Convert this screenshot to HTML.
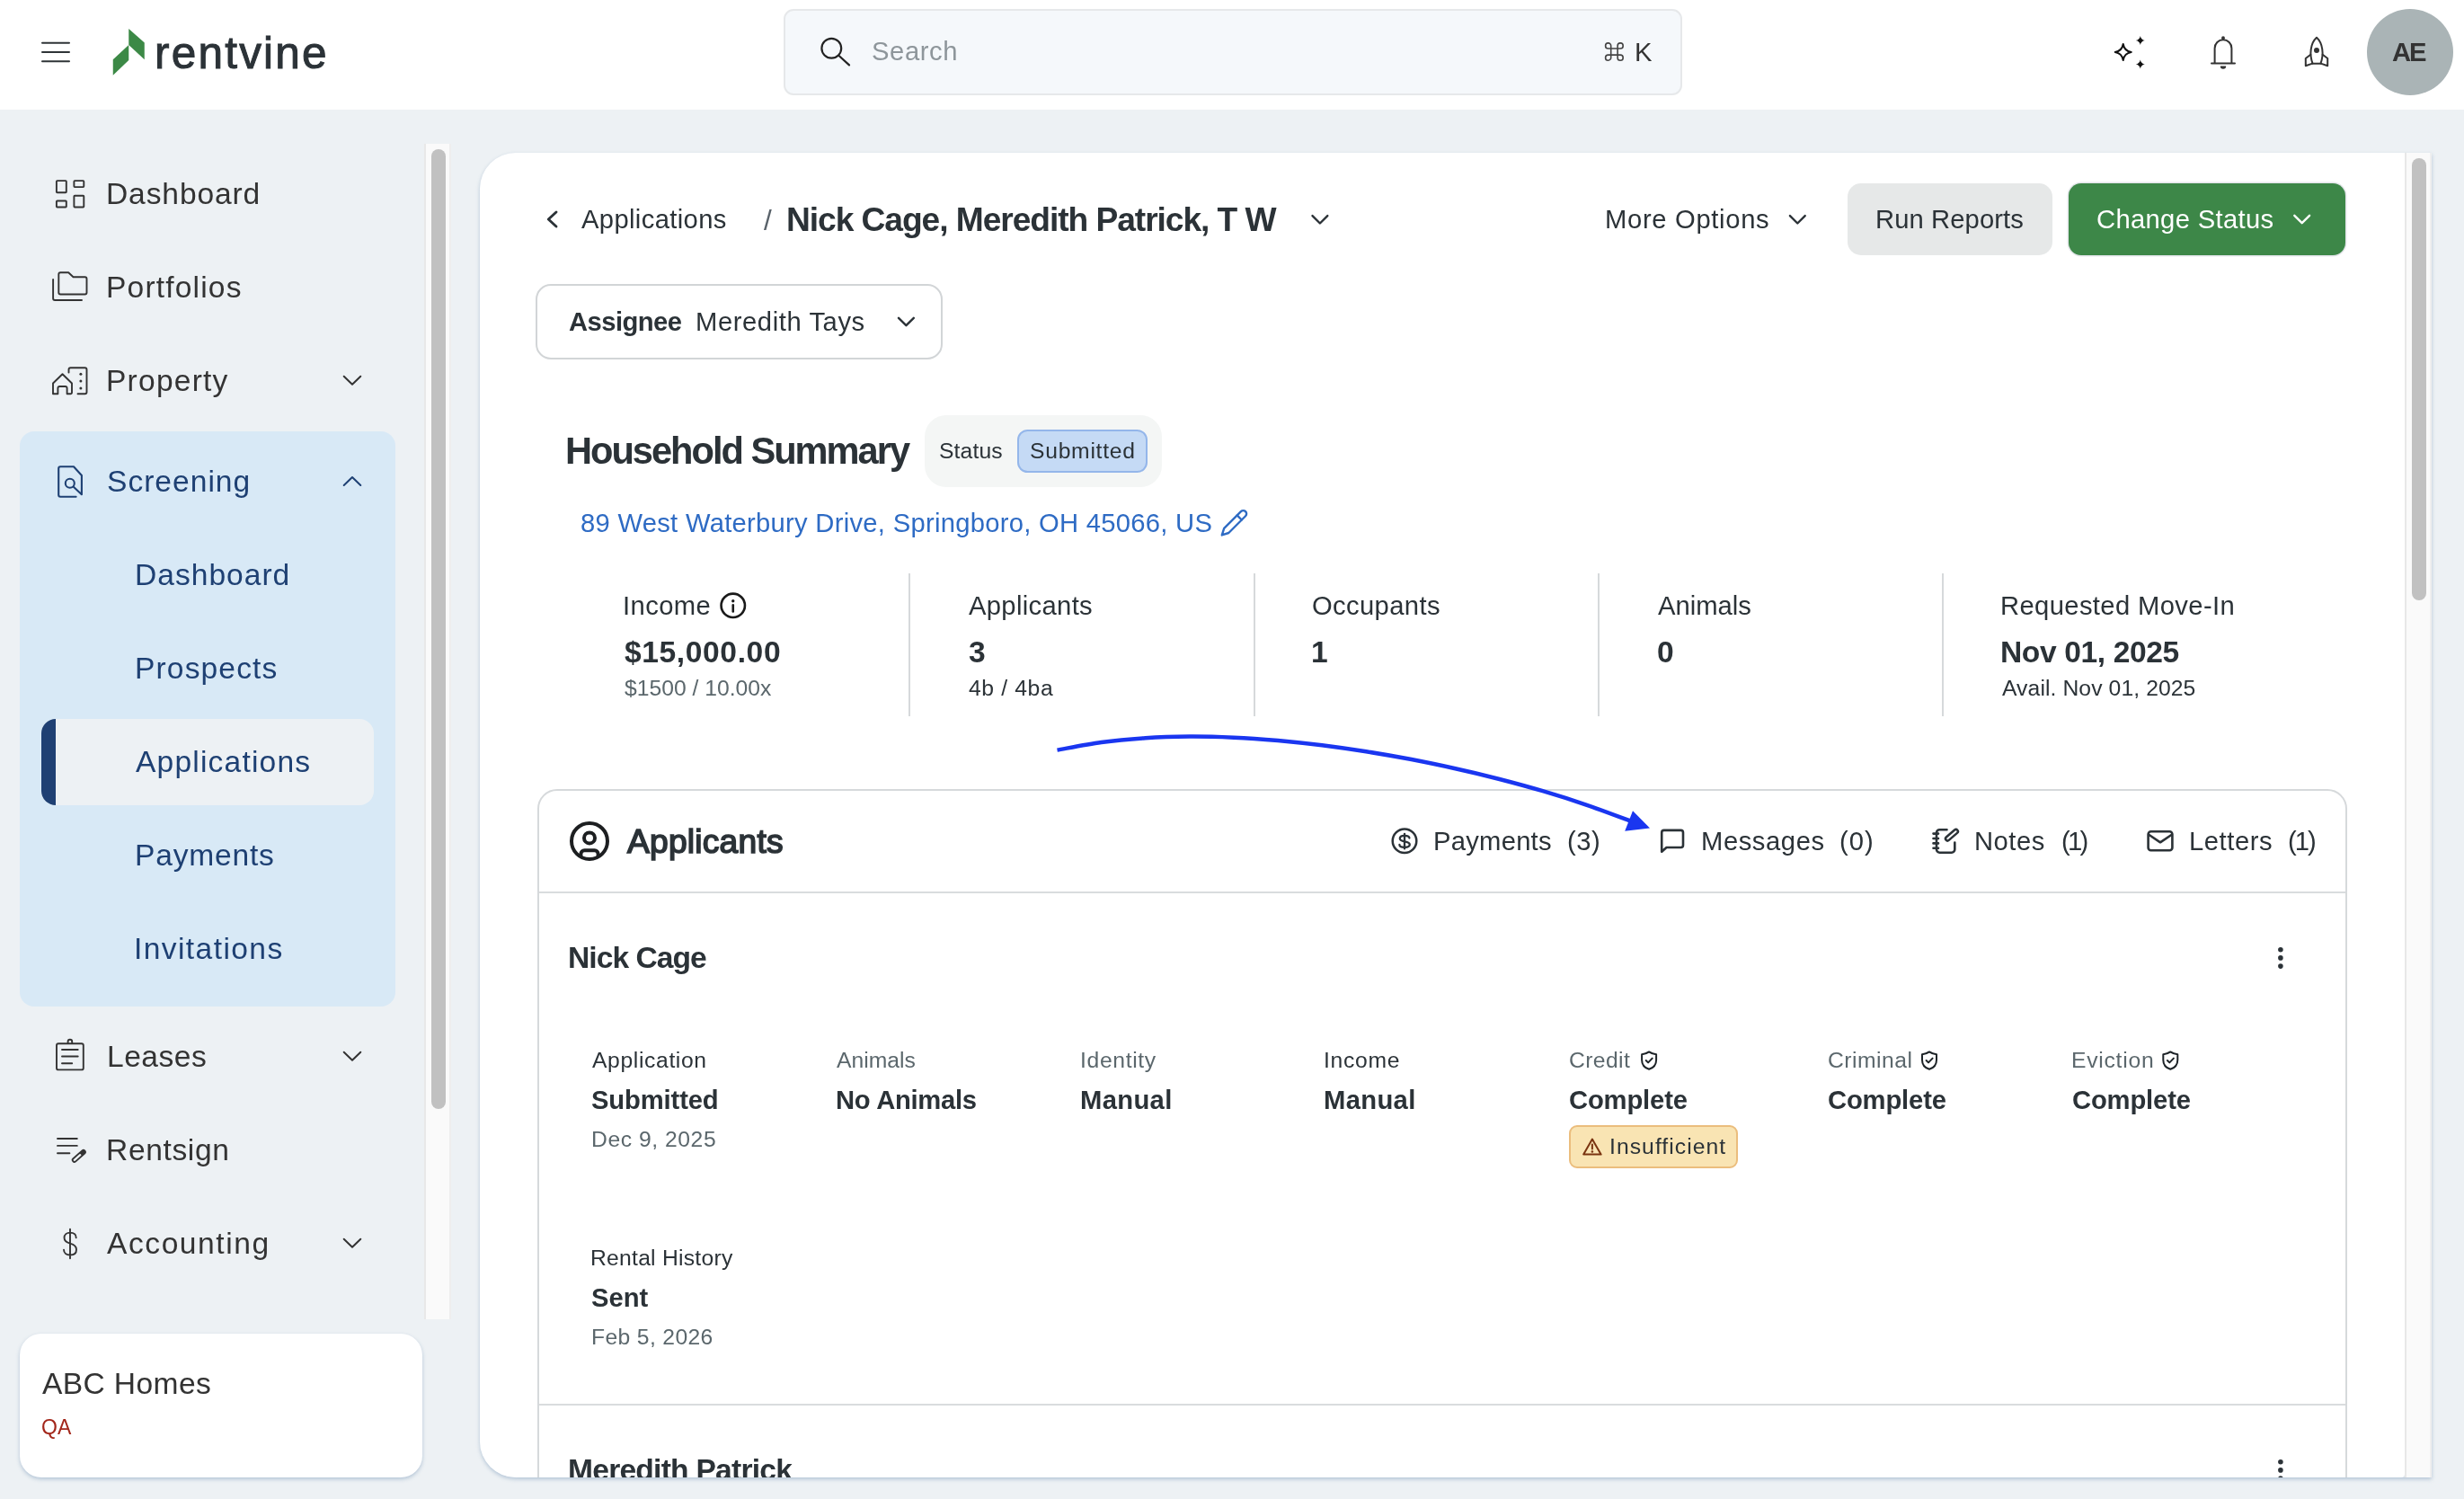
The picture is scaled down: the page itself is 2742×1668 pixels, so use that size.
<!DOCTYPE html>
<html><head><meta charset="utf-8"><title>Rentvine</title>
<style>
*{box-sizing:border-box;margin:0;padding:0}
html,body{width:2742px;height:1668px;overflow:hidden;background:#edf1f4;font-family:"Liberation Sans",sans-serif}
.a{position:absolute}
.t{position:absolute;white-space:nowrap;line-height:1;will-change:transform}
svg{position:absolute;overflow:visible}
#top{left:0;top:0;width:2742px;height:122px;background:#fff}
#search{left:872px;top:10px;width:1000px;height:95.5px;background:#f5f8fb;border:2px solid #e6e8ea;border-radius:11px}
#avatar{left:2633.5px;top:10px;width:96.5px;height:96px;border-radius:50%;background:#aab4b6}
#grp{left:22px;top:480px;width:418px;height:639.5px;border-radius:16px;background:#d8e9f6}
#act{left:46px;top:799.6px;width:369.6px;height:96px;border-radius:16px;background:#edf1f4;overflow:hidden}
#act i{position:absolute;left:0;top:0;width:16px;height:100%;background:#1f4073}
#strack{left:472px;top:160px;width:30px;height:1308px;background:#fafafa;border-left:2px solid #e8e8e8;border-right:2px solid #eee}
#sthumb{left:480px;top:166px;width:16px;height:1068px;border-radius:8px;background:#c1c1c1}
#org{left:21.5px;top:1483.5px;width:448.5px;height:160.5px;border-radius:24px;background:#fff;box-shadow:0 2px 4px rgba(100,135,175,.42)}
#wrap{left:534px;top:170px;width:2172px;height:1474px;background:#dde5ee;border-radius:40px 0 0 40px;box-shadow:0 2px 4px rgba(100,135,175,.42)}
#panel{left:534px;top:170px;width:2142.2px;height:1474px;background:#fff;border-radius:40px 0 4px 40px;overflow:hidden}
#mtrack{left:2676px;top:170px;width:30px;height:1474px;background:#fafafa;border-left:2px solid #e8e8e8;border-right:2px solid #efefef}
#mthumb{left:2683.8px;top:176px;width:16.2px;height:492px;border-radius:8px;background:#c1c1c1}
#runb{left:2056.3px;top:203.9px;width:227.6px;height:80px;border-radius:15px;background:#e6e8e8}
#chgb{left:2301.9px;top:203.9px;width:308px;height:80px;border-radius:14px;background:#3d8748;box-shadow:0 0 0 1.5px #e4e6ea}
#asg{left:596.25px;top:315.75px;width:453px;height:83.75px;border:2px solid #d2d5d7;border-radius:17px;background:#fff}
#stc{left:1028.9px;top:462px;width:264.2px;height:80px;border-radius:24px;background:#f4f6f5}
#stb{left:1132px;top:478.1px;width:145px;height:48px;border-radius:11.5px;background:#c5daf5;border:2px solid #94b6ea}
.dv{position:absolute;top:638px;width:2px;height:159px;background:#d6d9db}
#card{left:598.2px;top:878px;width:2013.6px;height:900px;border:2px solid #d6d9db;border-radius:22px;background:#fff}
.hl{position:absolute;left:600px;width:2010px;height:2px;background:#d9dcde}
#warn{left:1746px;top:1252.3px;width:187.6px;height:47.4px;border-radius:9px;background:#f9e4b3;border:2px solid #ebbd7d}
</style></head><body>
<div id="top" class="a"></div>
<!-- hamburger -->
<svg style="left:0;top:0" width="200" height="122"><g stroke="#2f3437" stroke-width="2" stroke-linecap="round"><path d="M47 47.7H77M47 58H77M47 68.2H77"/></g>
<polygon points="143.25,32 160.75,47.5 160.75,66.25 143.25,50" fill="#3c8946"/><polygon points="143.25,50 143.25,67 125.75,83.75 125.75,66.25" fill="#3c8946"/></svg>
<div id="search" class="a"></div>
<svg style="left:900px;top:30px" width="60" height="60"><g fill="none" stroke="#222" stroke-width="2.2" stroke-linecap="round"><circle cx="25.3" cy="23.8" r="10.9"/><path d="M33.6 32L45 42.4"/></g></svg>
<svg style="left:0;top:0" width="2742" height="122"><g fill="none" stroke="#444" stroke-width="1.6"><path d="M1792.7 54H1800.1V61.1H1792.7ZM1792.7 54H1789.65A3.05 3.05 0 1 1 1792.7 50.95ZM1800.1 54V50.95A3.05 3.05 0 1 1 1803.15 54ZM1800.1 61.1H1803.15A3.05 3.05 0 1 1 1800.1 64.15ZM1792.7 61.1V64.15A3.05 3.05 0 1 1 1789.65 61.1Z"/></g></svg>
<svg style="left:0;top:0" width="2742" height="122"><path d="M2362.7 49Q2363.96 56.74 2371.7 58Q2363.96 59.26 2362.7 67Q2361.4399999999996 59.26 2353.7 58Q2361.4399999999996 56.74 2362.7 49Z" fill="none" stroke="#111" stroke-width="2" stroke-linejoin="round"/><path d="M2381.8 40Q2382.6000000000004 44.2 2386.8 45Q2382.6000000000004 45.8 2381.8 50Q2381.0 45.8 2376.8 45Q2381.0 44.2 2381.8 40Z" fill="#111"/><path d="M2381.8 66.4Q2382.6000000000004 70.60000000000001 2386.8 71.4Q2382.6000000000004 72.2 2381.8 76.4Q2381.0 72.2 2376.8 71.4Q2381.0 70.60000000000001 2381.8 66.4Z" fill="#111"/><g fill="none" stroke="#333" stroke-width="2" stroke-linecap="round" stroke-linejoin="round"><path d="M2464.6 70.6V53.7a9.4 9.4 0 0 1 18.8 0V70.6M2461 70.6H2487"/><path d="M2578 41.8C2571.2 48 2569.6 60 2573.6 70.8H2582.4C2586.4 60 2584.8 48 2578 41.8Z"/><path d="M2571.3 60.8L2565.8 65V73.2L2573.4 70.6M2584.7 60.8L2590.2 65V73.2L2582.6 70.6"/></g><circle cx="2474" cy="42.2" r="1.9" fill="#333"/><path d="M2470.8 73.6a3.2 3.2 0 0 0 6.4 0Z" fill="#333"/><circle cx="2578" cy="55.9" r="3" fill="#333"/></svg>
<div id="avatar" class="a"></div>

<!-- sidebar -->
<div id="grp" class="a"></div>
<div id="act" class="a"><i></i></div>
<div id="strack" class="a"></div><div id="sthumb" class="a"></div>
<div id="org" class="a"></div>
<svg style="left:0;top:0" width="520" height="1668"><g fill="none" stroke="#333333" stroke-width="1.9" stroke-linejoin="round" stroke-linecap="round"><rect x="62.9" y="201.1" width="10.9" height="13.1" rx="0.8"/><rect x="82.4" y="201.1" width="10.9" height="7" rx="0.8"/><rect x="62.9" y="223.5" width="10.9" height="7" rx="0.8"/><rect x="82.4" y="217.7" width="10.9" height="12.8" rx="0.8"/><path d="M65.3 325.5V305.3a2 2 0 0 1 2-2H76.2L81.5 308.3H94.5a2 2 0 0 1 2 2V325.5a2 2 0 0 1-2 2H67.3a2 2 0 0 1-2-2Z"/><path d="M59.1 311V332a2 2 0 0 0 2 2H91"/><path d="M59 438.2V426.5L69.5 416.3L80 426.5V436.7a1.5 1.5 0 0 1-1.5 1.5H74.6V432a2 2 0 0 0-2-2H66.4a2 2 0 0 0-2 2V438.2H60.5a1.5 1.5 0 0 1-1.5-1.5"/><path d="M76.5 414.5V411.2a2 2 0 0 1 2-2H94.5a2 2 0 0 1 2 2V436.2a2 2 0 0 1-2 2H86.5"/><rect x="63" y="1161.2" width="29.8" height="29.2" rx="2"/><path d="M75.6 1161V1159a2.3 2.3 0 0 1 4.6 0V1161"/><path d="M69 1168H86.7M69 1175.5H86.7M69 1183.3H80.2"/><path d="M64 1267H85.8M64 1274.9H85.8M64 1283.3H77.4"/><path d="M78 1367.8V1400.3M84.7 1377.2C84.7 1373.4 81.7 1371.6 78 1371.6C74.1 1371.6 71.5 1373.8 71.5 1377.3C71.5 1381.4 74.5 1382.7 78 1383.7C81.9 1384.8 85 1386.2 85 1390.4C85 1394.4 82 1396.5 78 1396.5C74 1396.5 71 1394.4 71 1390.6"/></g><circle cx="89.9" cy="416.3" r="1.5" fill="#333333"/><circle cx="89.9" cy="424.1" r="1.5" fill="#333333"/><circle cx="89.9" cy="432.1" r="1.5" fill="#333333"/><path d="M92.8 1282L82.8 1290.8" stroke="#333333" stroke-width="6" stroke-linecap="round"/><path d="M89.2 1285.2L82.8 1290.8" stroke="#edf1f4" stroke-width="2.4" stroke-linecap="round"/><g fill="none" stroke="#1e4073" stroke-width="2.1" stroke-linejoin="round" stroke-linecap="round"><path d="M84.6 552.8H67.2a2 2 0 0 1-2-2V521.2a2 2 0 0 1 2-2H82L90.9 529V550.3L81.6 541.6"/><circle cx="77.8" cy="537.8" r="5"/></g><path d="M382.7 418.8L392 427.8L401.3 418.8" stroke="#333333" stroke-width="2" fill="none" stroke-linecap="round" stroke-linejoin="round"/><path d="M382.7 540.0L392 531.0L401.3 540.0" stroke="#1e4073" stroke-width="2" fill="none" stroke-linecap="round" stroke-linejoin="round"/><path d="M382.7 1170.8L392 1179.8L401.3 1170.8" stroke="#333333" stroke-width="2" fill="none" stroke-linecap="round" stroke-linejoin="round"/><path d="M382.7 1378.8L392 1387.8L401.3 1378.8" stroke="#333333" stroke-width="2" fill="none" stroke-linecap="round" stroke-linejoin="round"/></svg>

<!-- main panel -->
<div id="wrap" class="a"></div><div id="panel" class="a"></div>
<div id="mtrack" class="a"></div><div id="mthumb" class="a"></div>
<div id="runb" class="a"></div><div id="chgb" class="a"></div>
<div id="asg" class="a"></div>
<div id="stc" class="a"></div><div id="stb" class="a"></div>
<div class="dv" style="left:1011px"></div><div class="dv" style="left:1394.7px"></div><div class="dv" style="left:1778px"></div><div class="dv" style="left:2161px"></div>
<div class="a" style="left:534px;top:170px;width:2142px;height:1474px;overflow:hidden;border-radius:40px 0 0 40px"><div id="card" class="a" style="left:64.2px;top:708px"></div>
<div class="hl" style="left:66px;top:822px"></div><div class="hl" style="left:66px;top:1391.7px"></div>
<div class="t" style="left:97.60px;top:1449.44px;font-size:33.6px;color:#2b3237;font-weight:700;letter-spacing:-0.760px;">Meredith Patrick</div>
</div>
<div id="warn" class="a"></div>
<svg style="left:0;top:0" width="2742" height="1668"><defs><clipPath id="pc"><rect x="534" y="170" width="2142" height="1474"/></clipPath><clipPath id="uc"><circle cx="656" cy="935.9" r="20"/></clipPath></defs><path d="M619 236L610.3 244L619 252" stroke="#2b3237" stroke-width="2.9" fill="none" stroke-linecap="round" stroke-linejoin="round"/><path d="M1460.5 240.10000000000002L1468.9 248.5L1477.3000000000002 240.10000000000002" stroke="#2b3237" stroke-width="2.4" fill="none" stroke-linecap="round" stroke-linejoin="round"/><path d="M1991.8999999999999 240.10000000000002L2000.3 248.5L2008.7 240.10000000000002" stroke="#2b3237" stroke-width="2.4" fill="none" stroke-linecap="round" stroke-linejoin="round"/><path d="M2553.2999999999997 239.8L2561.7 248.2L2570.1 239.8" stroke="#fff" stroke-width="2.4" fill="none" stroke-linecap="round" stroke-linejoin="round"/><path d="M1000.0 353.8L1008.4 362.2L1016.8 353.8" stroke="#2b3237" stroke-width="2.4" fill="none" stroke-linecap="round" stroke-linejoin="round"/><g fill="none" stroke="#2e6bc4" stroke-width="2.4" stroke-linejoin="round" stroke-linecap="round"><path d="M1359.8 595.4L1362.2 587.9L1380.95 569.15A3.6 3.6 0 0 1 1386.05 574.25L1367.3 593Z"/><path d="M1376.7 573.4L1381.8 578.5"/></g><circle cx="815.75" cy="673.8" r="13.2" fill="none" stroke="#1a1a1a" stroke-width="2.6"/><circle cx="815.75" cy="668.8" r="1.7" fill="#1a1a1a"/><path d="M815.75 673.4V680.4" stroke="#1a1a1a" stroke-width="2.6" stroke-linecap="round"/><g fill="none" stroke="#1d1f21" stroke-width="4"><circle cx="656" cy="935.9" r="20"/><circle cx="656" cy="932.4" r="6"/><g clip-path="url(#uc)"><rect x="646.4" y="946.2" width="19.2" height="16" rx="4"/></g></g><g fill="none" stroke="#2b3237" stroke-width="2.5" stroke-linecap="round"><circle cx="1563" cy="935.8" r="13.3"/><path d="M1563 927.8V944.4" stroke-width="2.3"/><path stroke-width="2.3" d="M1568.4 932.6C1568.4 930.6 1566 929.8 1563 929.8C1560 929.8 1557.8 931 1557.8 933C1557.8 935.2 1560 935.8 1563 936.3C1566 936.8 1568.8 937.5 1568.8 939.8C1568.8 941.8 1566 942.8 1563 942.8C1560 942.8 1557.4 942 1557.4 940"/></g><path d="M1854.5 943H1870.5a2.5 2.5 0 0 0 2.5-2.5V926.4a2.5 2.5 0 0 0-2.5-2.5H1851.7a2.5 2.5 0 0 0-2.5 2.5V947.8Z" fill="none" stroke="#2b3237" stroke-width="2.6" stroke-linejoin="round"/><g fill="none" stroke="#2b3237" stroke-width="2.6" stroke-linecap="round" stroke-linejoin="round"><path d="M2166.5 923.2H2158.5a3.5 3.5 0 0 0-3.5 3.5V945.2a3.5 3.5 0 0 0 3.5 3.5H2171.8a3.5 3.5 0 0 0 3.5-3.5V937.5"/><path d="M2151.5 927.6H2157M2151.5 933H2157M2151.5 938.4H2157M2151.5 943.8H2157"/></g><path d="M2176.6 925.2L2167.3 933.2" stroke="#2b3237" stroke-width="7" stroke-linecap="round"/><path d="M2176.6 925.2L2167.3 933.2" stroke="#fff" stroke-width="2" stroke-linecap="round"/><g fill="none" stroke="#2b3237" stroke-width="2.6" stroke-linejoin="round" stroke-linecap="round"><rect x="2390.6" y="925.3" width="26.8" height="21" rx="3"/><path d="M2391.6 929L2404 937.3L2416.4 929"/></g><g fill="#2b3237" clip-path="url(#pc)"><circle cx="2537.9" cy="1056.7" r="2.8"/><circle cx="2537.9" cy="1065.9" r="2.8"/><circle cx="2537.9" cy="1075.1" r="2.8"/><circle cx="2537.9" cy="1626.7" r="2.8"/><circle cx="2537.9" cy="1635.9" r="2.8"/><circle cx="2537.9" cy="1645.1" r="2.8"/></g><g transform="translate(1826.1 1169.2)" fill="none" stroke="#1d2327" stroke-width="2" stroke-linejoin="round" stroke-linecap="round"><path d="M9 1.2C11.5 3 14 3.8 17 4V10.2C17 15.8 13.2 19.2 9 20.6C4.8 19.2 1 15.8 1 10.2V4C4 3.8 6.5 3 9 1.2Z"/><path d="M5.6 10.8L8 13.2L12.6 8.4"/></g><g transform="translate(2138 1169.2)" fill="none" stroke="#1d2327" stroke-width="2" stroke-linejoin="round" stroke-linecap="round"><path d="M9 1.2C11.5 3 14 3.8 17 4V10.2C17 15.8 13.2 19.2 9 20.6C4.8 19.2 1 15.8 1 10.2V4C4 3.8 6.5 3 9 1.2Z"/><path d="M5.6 10.8L8 13.2L12.6 8.4"/></g><g transform="translate(2406.3 1169.2)" fill="none" stroke="#1d2327" stroke-width="2" stroke-linejoin="round" stroke-linecap="round"><path d="M9 1.2C11.5 3 14 3.8 17 4V10.2C17 15.8 13.2 19.2 9 20.6C4.8 19.2 1 15.8 1 10.2V4C4 3.8 6.5 3 9 1.2Z"/><path d="M5.6 10.8L8 13.2L12.6 8.4"/></g><g fill="none" stroke="#7a3410" stroke-width="2" stroke-linejoin="round" stroke-linecap="round"><path d="M1771.9 1267.6L1781.6 1284.6H1762.2Z"/><path d="M1771.9 1273.6V1278.4"/></g><circle cx="1771.9" cy="1281.6" r="1.25" fill="#7a3410"/><path d="M1176.5 834.6C1184.7 833.2 1209.2 828.2 1225.6 826.0C1242.0 823.8 1258.4 822.3 1274.7 821.2C1291.1 820.1 1307.5 819.7 1323.8 819.6C1340.2 819.5 1356.6 820.0 1373.0 820.7C1389.3 821.4 1405.7 822.6 1422.1 824.0C1438.4 825.5 1454.8 827.3 1471.2 829.3C1487.6 831.4 1503.9 833.7 1520.3 836.3C1536.7 838.9 1553.1 841.7 1569.4 844.8C1585.8 848.0 1602.2 851.3 1618.5 855.0C1634.9 858.6 1651.3 862.5 1667.7 866.7C1684.0 870.9 1700.4 875.3 1716.8 880.2C1733.1 885.0 1749.5 890.2 1765.9 895.8C1782.3 901.4 1806.8 910.8 1815.0 913.8" fill="none" stroke="#1a36f0" stroke-width="4.5" stroke-linecap="butt"/><polygon points="1836,921.6 1817,902.2 1808.2,924.8" fill="#1a36f0"/></svg>
<div class="t" style="left:172.00px;top:33.52px;font-size:49.5px;color:#2b3237;letter-spacing:2.214px;-webkit-text-stroke:1px #2b3237;">rentvine</div>
<div class="t" style="left:970.00px;top:43.18px;font-size:29.2px;color:#8e969b;letter-spacing:0.600px;">Search</div>
<div class="t" style="left:1819.20px;top:44.18px;font-size:29.2px;color:#333;">K</div>
<div class="t" style="left:2662.40px;top:44.18px;font-size:29.2px;color:#333;font-weight:700;letter-spacing:-2.000px;">AE</div>
<div class="t" style="left:118.00px;top:199.44px;font-size:33.6px;color:#333333;letter-spacing:0.875px;">Dashboard</div>
<div class="t" style="left:118.00px;top:303.44px;font-size:33.6px;color:#333333;letter-spacing:1.167px;">Portfolios</div>
<div class="t" style="left:118.20px;top:407.44px;font-size:33.6px;color:#333333;letter-spacing:1.214px;">Property</div>
<div class="t" style="left:119.00px;top:519.44px;font-size:33.6px;color:#1e4073;letter-spacing:1.000px;">Screening</div>
<div class="t" style="left:150.00px;top:623.44px;font-size:33.6px;color:#1e4073;letter-spacing:1.000px;">Dashboard</div>
<div class="t" style="left:150.00px;top:727.44px;font-size:33.6px;color:#1e4073;letter-spacing:1.125px;">Prospects</div>
<div class="t" style="left:151.40px;top:831.44px;font-size:33.6px;color:#1e4073;letter-spacing:1.182px;">Applications</div>
<div class="t" style="left:150.00px;top:935.44px;font-size:33.6px;color:#1e4073;letter-spacing:0.786px;">Payments</div>
<div class="t" style="left:149.00px;top:1039.44px;font-size:33.6px;color:#1e4073;letter-spacing:1.400px;">Invitations</div>
<div class="t" style="left:118.60px;top:1159.44px;font-size:33.6px;color:#333333;letter-spacing:0.480px;">Leases</div>
<div class="t" style="left:118.20px;top:1263.44px;font-size:33.6px;color:#333333;letter-spacing:0.629px;">Rentsign</div>
<div class="t" style="left:119.40px;top:1367.44px;font-size:33.6px;color:#333333;letter-spacing:1.556px;">Accounting</div>
<div class="t" style="left:46.80px;top:1522.84px;font-size:33.6px;color:#333333;letter-spacing:0.375px;">ABC Homes</div>
<div class="t" style="left:45.60px;top:1577.45px;font-size:23.0px;color:#a3271b;">QA</div>
<div class="t" style="left:647.00px;top:229.68px;font-size:29.2px;color:#2b3237;letter-spacing:0.364px;">Applications</div>
<div class="t" style="left:850.00px;top:230.22px;font-size:31.5px;color:#59626a;">/</div>
<div class="t" style="left:874.90px;top:226.38px;font-size:37.2px;color:#2b3237;font-weight:700;letter-spacing:-1.065px;">Nick Cage, Meredith Patrick, T W</div>
<div class="t" style="left:1786.00px;top:230.18px;font-size:29.2px;color:#2b3237;letter-spacing:0.682px;">More Options</div>
<div class="t" style="left:2087.00px;top:230.18px;font-size:29.2px;color:#2b3237;letter-spacing:0.100px;">Run Reports</div>
<div class="t" style="left:2333.00px;top:229.93px;font-size:29.2px;color:#ffffff;letter-spacing:0.333px;">Change Status</div>
<div class="t" style="left:632.50px;top:343.93px;font-size:29.2px;color:#2b3237;font-weight:700;letter-spacing:-0.536px;">Assignee</div>
<div class="t" style="left:773.75px;top:343.93px;font-size:29.2px;color:#2b3237;letter-spacing:0.583px;">Meredith Tays</div>
<div class="t" style="left:628.75px;top:480.64px;font-size:41.6px;color:#2b3237;font-weight:700;letter-spacing:-2.000px;">Household Summary</div>
<div class="t" style="left:1044.70px;top:490.00px;font-size:24.7px;color:#2b3237;letter-spacing:0.120px;">Status</div>
<div class="t" style="left:1146.00px;top:490.00px;font-size:24.7px;color:#2b3237;letter-spacing:0.725px;">Submitted</div>
<div class="t" style="left:646.00px;top:568.18px;font-size:29.2px;color:#2e6bc4;letter-spacing:0.281px;">89 West Waterbury Drive, Springboro, OH 45066, US</div>
<div class="t" style="left:693.00px;top:660.18px;font-size:29.2px;color:#2b3237;letter-spacing:0.400px;">Income</div>
<div class="t" style="left:1078.30px;top:660.18px;font-size:29.2px;color:#2b3237;letter-spacing:0.333px;">Applicants</div>
<div class="t" style="left:1459.90px;top:660.18px;font-size:29.2px;color:#2b3237;letter-spacing:0.375px;">Occupants</div>
<div class="t" style="left:1844.80px;top:660.18px;font-size:29.2px;color:#2b3237;">Animals</div>
<div class="t" style="left:2225.80px;top:660.18px;font-size:29.2px;color:#2b3237;letter-spacing:0.375px;">Requested Move-In</div>
<div class="t" style="left:695.00px;top:709.44px;font-size:33.6px;color:#2b3237;font-weight:700;letter-spacing:0.611px;">$15,000.00</div>
<div class="t" style="left:1078.10px;top:709.44px;font-size:33.6px;color:#2b3237;font-weight:700;">3</div>
<div class="t" style="left:1458.90px;top:709.44px;font-size:33.6px;color:#2b3237;font-weight:700;">1</div>
<div class="t" style="left:1843.60px;top:709.44px;font-size:33.6px;color:#2b3237;font-weight:700;">0</div>
<div class="t" style="left:2225.80px;top:709.44px;font-size:33.6px;color:#2b3237;font-weight:700;letter-spacing:-0.382px;">Nov 01, 2025</div>
<div class="t" style="left:695.00px;top:754.00px;font-size:24.7px;color:#5b676c;">$1500 / 10.00x</div>
<div class="t" style="left:1078.30px;top:754.00px;font-size:24.7px;color:#2b3237;letter-spacing:0.643px;">4b / 4ba</div>
<div class="t" style="left:2227.90px;top:754.00px;font-size:24.7px;color:#2b3237;letter-spacing:0.094px;">Avail. Nov 01, 2025</div>
<div class="t" style="left:698.20px;top:917.58px;font-size:37.2px;color:#2b3237;letter-spacing:0.222px;-webkit-text-stroke:1.6px #2b3237;">Applicants</div>
<div class="t" style="left:1594.90px;top:922.18px;font-size:29.2px;color:#2b3237;letter-spacing:0.257px;">Payments</div>
<div class="t" style="left:1744.20px;top:922.18px;font-size:29.2px;color:#2b3237;letter-spacing:0.500px;">(3)</div>
<div class="t" style="left:1893.00px;top:922.18px;font-size:29.2px;color:#2b3237;letter-spacing:0.571px;">Messages</div>
<div class="t" style="left:2047.20px;top:922.18px;font-size:29.2px;color:#2b3237;letter-spacing:1.000px;">(0)</div>
<div class="t" style="left:2197.40px;top:922.18px;font-size:29.2px;color:#2b3237;letter-spacing:0.500px;">Notes</div>
<div class="t" style="left:2294.10px;top:922.18px;font-size:29.2px;color:#2b3237;letter-spacing:-2.750px;">(1)</div>
<div class="t" style="left:2436.00px;top:922.18px;font-size:29.2px;color:#2b3237;letter-spacing:0.567px;">Letters</div>
<div class="t" style="left:2546.20px;top:922.18px;font-size:29.2px;color:#2b3237;letter-spacing:-2.000px;">(1)</div>
<div class="t" style="left:631.60px;top:1049.44px;font-size:33.6px;color:#2b3237;font-weight:700;letter-spacing:-0.950px;">Nick Cage</div>
<div class="t" style="left:658.90px;top:1168.01px;font-size:24.7px;color:#2b3237;letter-spacing:0.630px;">Application</div>
<div class="t" style="left:931.20px;top:1168.01px;font-size:24.7px;color:#5b676c;">Animals</div>
<div class="t" style="left:1202.10px;top:1168.01px;font-size:24.7px;color:#5b676c;letter-spacing:0.657px;">Identity</div>
<div class="t" style="left:1472.90px;top:1168.01px;font-size:24.7px;color:#2b3237;letter-spacing:0.700px;">Income</div>
<div class="t" style="left:1746.10px;top:1168.01px;font-size:24.7px;color:#5b676c;letter-spacing:0.400px;">Credit</div>
<div class="t" style="left:2033.90px;top:1168.01px;font-size:24.7px;color:#5b676c;letter-spacing:0.500px;">Criminal</div>
<div class="t" style="left:2305.00px;top:1168.01px;font-size:24.7px;color:#5b676c;letter-spacing:0.743px;">Eviction</div>
<div class="t" style="left:658.00px;top:1210.18px;font-size:29.2px;color:#2b3237;font-weight:700;letter-spacing:-0.125px;">Submitted</div>
<div class="t" style="left:929.80px;top:1210.18px;font-size:29.2px;color:#2b3237;font-weight:700;letter-spacing:-0.267px;">No Animals</div>
<div class="t" style="left:1202.10px;top:1210.18px;font-size:29.2px;color:#2b3237;font-weight:700;letter-spacing:0.340px;">Manual</div>
<div class="t" style="left:1472.90px;top:1210.18px;font-size:29.2px;color:#2b3237;font-weight:700;letter-spacing:0.340px;">Manual</div>
<div class="t" style="left:1746.10px;top:1210.18px;font-size:29.2px;color:#2b3237;font-weight:700;letter-spacing:-0.143px;">Complete</div>
<div class="t" style="left:2033.90px;top:1210.18px;font-size:29.2px;color:#2b3237;font-weight:700;letter-spacing:-0.143px;">Complete</div>
<div class="t" style="left:2306.00px;top:1210.18px;font-size:29.2px;color:#2b3237;font-weight:700;letter-spacing:-0.143px;">Complete</div>
<div class="t" style="left:658.10px;top:1256.01px;font-size:24.7px;color:#5b676c;letter-spacing:0.550px;">Dec 9, 2025</div>
<div class="t" style="left:1791.40px;top:1264.01px;font-size:24.7px;color:#2b3237;letter-spacing:1.055px;">Insufficient</div>
<div class="t" style="left:656.90px;top:1388.01px;font-size:24.7px;color:#2b3237;letter-spacing:0.246px;">Rental History</div>
<div class="t" style="left:657.80px;top:1430.18px;font-size:29.2px;color:#2b3237;font-weight:700;">Sent</div>
<div class="t" style="left:658.10px;top:1476.01px;font-size:24.7px;color:#5b676c;letter-spacing:0.350px;">Feb 5, 2026</div>
</body></html>
